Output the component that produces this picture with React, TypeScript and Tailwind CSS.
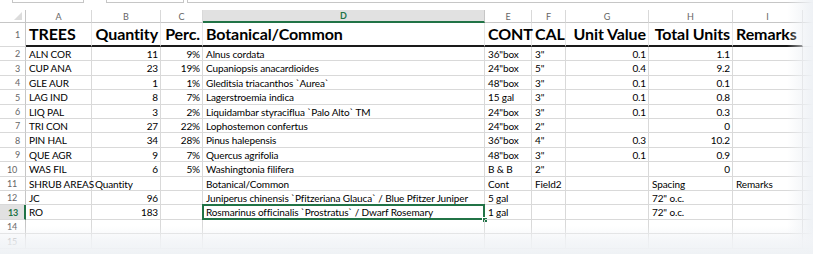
import React from "react";

const COLS =
  "grid grid-cols-[26px_66px_69px_42px_282px_47px_34px_83px_84px_70px_1fr]";

type Cell = { t: string; r?: boolean };

const L = (t: string): Cell => ({ t });
const R = (t: string): Cell => ({ t, r: true });

const rows: { n: string; h: string; cells: Cell[] }[] = [
  { n: "2", h: "h-[14px]", cells: [L("ALN COR"), R("11"), R("9%"), L("Alnus cordata"), L('36"box'), L('3"'), R("0.1"), R("1.1"), L("")] },
  { n: "3", h: "h-[15px]", cells: [L("CUP ANA"), R("23"), R("19%"), L("Cupaniopsis anacardioides"), L('24"box'), L('5"'), R("0.4"), R("9.2"), L("")] },
  { n: "4", h: "h-[14px]", cells: [L("GLE AUR"), R("1"), R("1%"), L("Gleditsia triacanthos `Aurea`"), L('48"box'), L('3"'), R("0.1"), R("0.1"), L("")] },
  { n: "5", h: "h-[15px]", cells: [L("LAG IND"), R("8"), R("7%"), L("Lagerstroemia indica"), L("15 gal"), L('3"'), R("0.1"), R("0.8"), L("")] },
  { n: "6", h: "h-[14px]", cells: [L("LIQ PAL"), R("3"), R("2%"), L("Liquidambar styraciflua `Palo Alto` TM"), L('24"box'), L('3"'), R("0.1"), R("0.3"), L("")] },
  { n: "7", h: "h-[14px]", cells: [L("TRI CON"), R("27"), R("22%"), L("Lophostemon confertus"), L('24"box'), L('2"'), R(""), R("0"), L("")] },
  { n: "8", h: "h-[15px]", cells: [L("PIN HAL"), R("34"), R("28%"), L("Pinus halepensis"), L('36"box'), L('4"'), R("0.3"), R("10.2"), L("")] },
  { n: "9", h: "h-[14px]", cells: [L("QUE AGR"), R("9"), R("7%"), L("Quercus agrifolia"), L('48"box'), L('3"'), R("0.1"), R("0.9"), L("")] },
  { n: "10", h: "h-[15px]", cells: [L("WAS FIL"), R("6"), R("5%"), L("Washingtonia filifera"), L("B & B"), L('2"'), R(""), R("0"), L("")] },
  { n: "11", h: "h-[14px]", cells: [L("SHRUB AREAS"), L("Quantity"), L(""), L("Botanical/Common"), L("Cont"), L("Field2"), L(""), L("Spacing"), L("Remarks")] },
  { n: "12", h: "h-[14px]", cells: [L("JC"), R("96"), L(""), L("Juniperus chinensis `Pfitzeriana Glauca` / Blue Pfitzer Juniper"), L("5 gal"), L(""), L(""), L('72" o.c.'), L("")] },
  { n: "13", h: "h-[15px]", cells: [L("RO"), R("183"), L(""), L("Rosmarinus officinalis `Prostratus` / Dwarf Rosemary"), L("1 gal"), L(""), L(""), L('72" o.c.'), L("")] },
  { n: "14", h: "h-[14px]", cells: [L(""), L(""), L(""), L(""), L(""), L(""), L(""), L(""), L("")] },
  { n: "15", h: "h-[15px]", cells: [L(""), L(""), L(""), L(""), L(""), L(""), L(""), L(""), L("")] },
];

const letters = ["A", "B", "C", "D", "E", "F", "G", "H", "I"];
const header1 = [
  { t: "TREES", r: false },
  { t: "Quantity", r: true },
  { t: "Perc.", r: true },
  { t: "Botanical/Common", r: false },
  { t: "CONT", r: false },
  { t: "CAL", r: false },
  { t: "Unit Value", r: true },
  { t: "Total Units", r: true },
  { t: "Remarks", r: false },
];

export default function App() {
  return (
    <div className="relative w-[813px] h-[254px] overflow-hidden bg-white font-['Lato',sans-serif] text-black">
      {/* formula bar remnants */}
      <div className="flex h-[10px]">
        <div className="ml-[12px] w-[72px] h-[3px] border-x border-b border-[#c6c6c6]" />
        <div className="ml-[22px] w-[78px] h-[3px] border-x border-b border-[#c6c6c6]" />
        <div className="ml-[3px] flex-1 h-[3px] border-l border-b border-[#c6c6c6]" />
      </div>

      {/* column header row */}
      <div className={`${COLS} h-[13px] text-[9px] leading-none text-[#666]`}>
        <div className="relative border-r border-b border-[#c6c6c6]">
          <div className="absolute right-[3px] bottom-[2px] w-0 h-0 border-l-[8px] border-l-transparent border-b-[8px] border-b-[#dcdcdc]" />
        </div>
        {letters.map((l) =>
          l === "D" ? (
            <div
              key={l}
              className="flex items-center justify-center bg-[#e1e1e1] border-r border-[#c6c6c6] border-b-2 border-b-[#217346] text-[#217346] font-bold"
            >
              {l}
            </div>
          ) : (
            <div
              key={l}
              className="flex items-center justify-center border-r border-b border-[#d9d9d9] border-b-[#c6c6c6]"
            >
              {l}
            </div>
          )
        )}
        <div className="border-b border-[#c6c6c6]" />
      </div>

      {/* row 1 */}
      <div className={`${COLS} h-[24px]`}>
        <div className="flex items-center pl-[15px] text-[9px] text-[#666] border-r border-b border-[#c6c6c6] border-b-[#d9d9d9]">
          1
        </div>
        {header1.map((c, i) => (
          <div
            key={i}
            className={`flex items-center whitespace-nowrap overflow-visible border-r border-[#e6e6e6] border-b-2 border-b-[#1a1a1a] text-[16px] font-bold leading-none tracking-[-0.1px] ${
              c.r ? "justify-end pr-[2px]" : "justify-start pl-[3px]"
            }`}
          >
            {c.t}
          </div>
        ))}
        <div className="border-b border-[#d9d9d9]" />
      </div>

      {/* data rows */}
      {rows.map((row) => {
        const sel = row.n === "13";
        return (
          <div key={row.n} className={`${COLS} ${row.h} text-[10px] leading-none tracking-[-0.12px]`}>
            {sel ? (
              <div className="flex items-center pl-[8px] text-[9px] font-bold text-[#217346] bg-[#e1e1e1] border-r-2 border-r-[#217346] border-b border-b-[#d9d9d9]">
                {row.n}
              </div>
            ) : (
              <div
                className={`flex items-center text-[9px] text-[#666] border-r border-r-[#c6c6c6] border-b border-b-[#d9d9d9] ${
                  row.n.length === 1 ? "pl-[15px]" : "pl-[7px]"
                }`}
              >
                {row.n}
              </div>
            )}
            {row.cells.map((c, i) => (
              <div
                key={i}
                className={`relative flex items-center whitespace-nowrap border-r border-b border-[#d9d9d9] ${
                  c.r ? "justify-end pr-[2px]" : "justify-start pl-[3px]"
                }`}
              >
                {c.t}
                {sel && i === 3 && (
                  <>
                    <div className="absolute -left-px -top-px -right-px -bottom-px border-2 border-[#217346]" />
                    <div className="absolute -right-[4px] -bottom-[4px] w-[6px] h-[6px] bg-[#217346] border border-white" />
                  </>
                )}
              </div>
            ))}
            <div className="border-b border-[#d9d9d9]" />
          </div>
        );
      })}

      {/* fades */}
      <div className="pointer-events-none absolute right-0 top-0 bottom-0 w-[26px] bg-gradient-to-r from-[#f2f4f7]/0 to-[#eef1f5]" />
      <div className="pointer-events-none absolute left-0 right-0 bottom-0 h-[28px] bg-gradient-to-b from-[#f2f4f7]/0 via-[#f2f4f7]/80 to-[#eff2f5]" />
    </div>
  );
}
